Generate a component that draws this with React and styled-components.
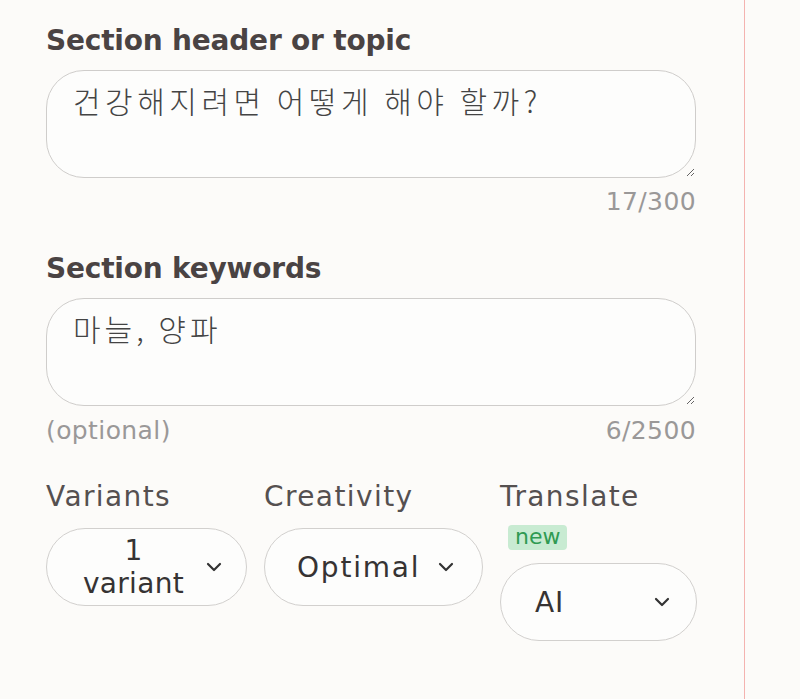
import React from "react";
import styled, { createGlobalStyle } from "styled-components";

const GlobalStyle = createGlobalStyle`
  html, body {
    margin: 0;
    padding: 0;
    background: #fcfbf9;
  }
  body {
    font-family: "DejaVu Sans", "Noto Sans CJK KR", sans-serif;
    color: #4a4343;
  }
`;

const Panel = styled.div`
  box-sizing: border-box;
  width: 745px;
  min-height: 100vh;
  padding: 23px 48px 40px 46px;
  border-right: 1.5px solid #f4b3b0;
`;

const Label = styled.div`
  font-size: 28px;
  font-weight: ${(p) => (p.$light ? 400 : 700)};
  line-height: 36px;
  color: ${(p) => (p.$light ? "#555050" : "#4a4343")};
  letter-spacing: ${(p) => (p.$light ? "1.4px" : "-0.2px")};
  margin-top: ${(p) => p.$top || 0}px;
  white-space: nowrap;
`;

const TextArea = styled.textarea`
  display: block;
  box-sizing: border-box;
  width: 100%;
  height: 108px;
  margin-top: 11px;
  padding: 9px 26px;
  border: 1.5px solid #cfcdcb;
  border-radius: 38px;
  background: #fdfdfc;
  font-family: "Noto Sans CJK KR", "DejaVu Sans", sans-serif;
  font-weight: 300;
  font-size: 30px;
  line-height: 40px;
  letter-spacing: ${(p) => p.$spacing || 4}px;
  color: #444;
  outline: none;
`;

const Meta = styled.div`
  display: flex;
  justify-content: space-between;
  margin-top: ${(p) => p.$top || 4}px;
  font-size: 25px;
  line-height: 30px;
  letter-spacing: 0.4px;
  color: #9a9898;
`;

const Options = styled.div`
  display: flex;
  gap: 17px;
  margin-top: 33px;
  align-items: flex-start;
`;

const Column = styled.div`
  display: flex;
  flex-direction: column;
  align-items: flex-start;
  width: ${(p) => p.$width}px;
  flex: none;
`;

const Badge = styled.span`
  margin: 10px 0 0 8px;
  padding: 0 7px;
  height: 25px;
  line-height: 24px;
  border-radius: 4px;
  background: #c8ebd2;
  color: #2f9a52;
  font-size: 22px;
`;

const Select = styled.div`
  box-sizing: border-box;
  display: flex;
  align-items: center;
  gap: 10px;
  width: 100%;
  height: 78px;
  margin-top: ${(p) => p.$top || 13}px;
  padding: 0 ${(p) => p.$right || 28}px 0 ${(p) => p.$left || 20}px;
  border: 1.5px solid #d2d0ce;
  border-radius: 39px;
  background: #fdfdfc;
  font-size: 28px;
  line-height: 33px;
  letter-spacing: ${(p) => p.$spacing || 0.8}px;
  color: #363333;
`;

const Value = styled.span`
  flex: 1;
  text-align: ${(p) => p.$align || "center"};
`;

const Chevron = () => (
  <svg width="16" height="10" viewBox="0 0 16 10" fill="none">
    <polyline
      points="2,2 8,8 14,2"
      stroke="#333"
      strokeWidth="2.2"
      strokeLinecap="round"
      strokeLinejoin="round"
    />
  </svg>
);

export default function App() {
  return (
    <>
      <GlobalStyle />
      <Panel>
        <Label>Section header or topic</Label>
        <TextArea defaultValue="건강해지려면 어떻게 해야 할까?" $spacing={4.5} />
        <Meta $top={9}>
          <span />
          <span>17/300</span>
        </Meta>

        <Label $top={34}>Section keywords</Label>
        <TextArea defaultValue="마늘, 양파" $spacing={4} />
        <Meta $top={10}>
          <span>(optional)</span>
          <span>6/2500</span>
        </Meta>

        <Options>
          <Column $width={201}>
            <Label $light>Variants</Label>
            <Select $left={24} $right={24} $spacing={0.3}>
              <Value>
                1
                <br />
                variant
              </Value>
              <Chevron />
            </Select>
          </Column>
          <Column $width={219}>
            <Label $light>Creativity</Label>
            <Select $left={32} $right={28} $spacing={1.8}>
              <Value $align="left">Optimal</Value>
              <Chevron />
            </Select>
          </Column>
          <Column $width={197}>
            <Label $light>Translate</Label>
            <Badge>new</Badge>
            <Select $top={13} $left={34} $right={26}>
              <Value $align="left">AI</Value>
              <Chevron />
            </Select>
          </Column>
        </Options>
      </Panel>
    </>
  );
}
